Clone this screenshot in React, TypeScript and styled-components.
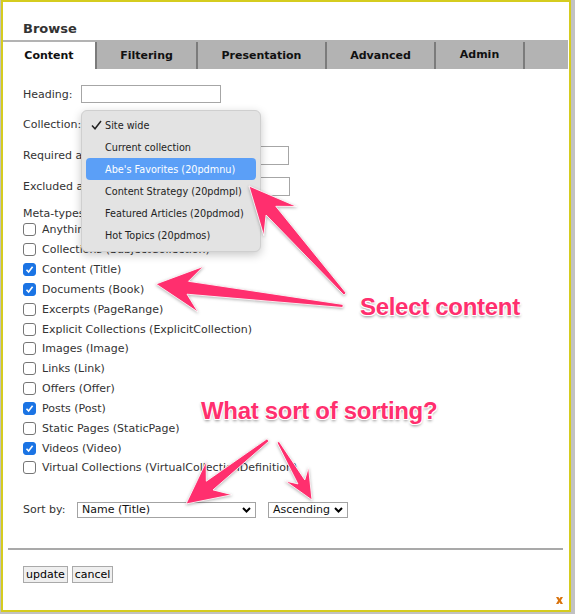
import React from "react";
import styled, { createGlobalStyle } from "styled-components";

const Global = createGlobalStyle`
  html, body { margin: 0; padding: 0; background: #c2c2c2; }
  body { font-family: "DejaVu Sans", Verdana, sans-serif; }
`;

const Stage = styled.div`
  position: relative;
  width: 575px;
  height: 614px;
  background: #c2c2c2;
  overflow: hidden;
`;

const Dialog = styled.div`
  position: relative;
  box-sizing: border-box;
  margin-left: 1px;
  width: 570px;
  height: 612px;
  border: 2px solid #d5cc1f;
  background: #fff;
  display: flex;
  flex-direction: column;
  font-family: "DejaVu Sans", Verdana, sans-serif;
  color: #333;
`;

const Title = styled.h1`
  margin: 19px 0 0 20px;
  font-size: 13px;
  line-height: 16px;
  font-weight: bold;
  color: #333;
`;

const TabBar = styled.div`
  margin: 3px 1px 0 0;
  padding-top: 2px;
  background: #b3b3b3;
  display: flex;
`;

const Tab = styled.div<{ $w: number; $active?: boolean; $lift?: number }>`
  box-sizing: border-box;
  width: ${(p) => p.$w}px;
  height: 27px;
  border-right: 2px solid #7b7b7b;
  background: ${(p) => (p.$active ? "#fff" : "transparent")};
  display: flex;
  align-items: center;
  justify-content: center;
  padding-bottom: ${(p) => p.$lift ?? 0}px;
  font-size: 11px;
  font-weight: bold;
  color: #111;
`;

const Body = styled.div`
  padding: 16px 20px 0 20px;
  display: flex;
  flex-direction: column;
`;

const Row = styled.div<{ $mt: number; $h: number; $w?: number }>`
  position: relative;
  display: flex;
  align-items: center;
  margin-top: ${(p) => p.$mt}px;
  height: ${(p) => p.$h}px;
  width: ${(p) => (p.$w ? `${p.$w}px` : "auto")};
`;

const Label = styled.span<{ $w?: number }>`
  flex: none;
  width: ${(p) => (p.$w ? `${p.$w}px` : "auto")};
  font-size: 11px;
  color: #333;
  white-space: nowrap;
`;

const TextInput = styled.input<{ $w?: number }>`
  box-sizing: border-box;
  height: 100%;
  margin: 0 0 0 ${(p) => (p.$w ? 0 : 5)}px;
  padding: 0 3px;
  border: 1px solid #a6a6a6;
  ${(p) => (p.$w ? `width: ${p.$w}px;` : "flex: 1; min-width: 0;")}
  font: 11px "DejaVu Sans", sans-serif;
`;

const Menu = styled.ul`
  position: absolute;
  left: 58px;
  top: -5px;
  z-index: 2;
  box-sizing: border-box;
  width: 180px;
  margin: 0;
  padding: 3px 4px 5px;
  list-style: none;
  background: #e3e3e3;
  border: 1px solid #cfcfcf;
  border-radius: 6px;
  box-shadow: 0 3px 10px rgba(0, 0, 0, 0.22);
  font-family: "DejaVu Sans", sans-serif;
  font-size: 9.7px;
`;

const MenuItem = styled.li<{ $hl?: boolean }>`
  height: 22px;
  display: flex;
  align-items: center;
  padding-left: 5px;
  border-radius: 4px;
  background: ${(p) => (p.$hl ? "#5b9ff7" : "transparent")};
  color: ${(p) => (p.$hl ? "#fff" : "#222")};
  white-space: nowrap;
`;

const CheckSlot = styled.span`
  width: 14px;
  flex: none;
  display: flex;
  align-items: center;
`;

const CheckList = styled.div`
  display: flex;
  flex-direction: column;
`;

const CheckRow = styled.label`
  height: 19.83px;
  display: flex;
  align-items: center;
  gap: 6px;
  font-size: 11px;
  color: #333;
  white-space: nowrap;
`;

const Box = styled.span<{ $on: boolean }>`
  box-sizing: border-box;
  flex: none;
  width: 13px;
  height: 13px;
  border-radius: 3px;
  border: 1px solid ${(p) => (p.$on ? "#1b74e4" : "#767676")};
  background: ${(p) => (p.$on ? "#1b74e4" : "#fff")};
  display: flex;
  align-items: center;
  justify-content: center;
`;

const SelectBox = styled.div<{ $w: number; $ml?: number }>`
  box-sizing: border-box;
  width: ${(p) => p.$w}px;
  height: 16px;
  margin-left: ${(p) => p.$ml ?? 0}px;
  border: 1px solid #a3a3a3;
  display: flex;
  align-items: center;
  justify-content: space-between;
  padding: 0 4px 0 4px;
  font-size: 11px;
  color: #111;
  white-space: nowrap;
`;

const Rule = styled.hr`
  margin: 29px 6px 0 5px;
  border: 0;
  border-top: 2px solid #a9a9a9;
  height: 0;
`;

const Footer = styled.div`
  margin-top: 16px;
  padding: 0 20px;
  display: flex;
  gap: 4px;
`;

const Button = styled.button`
  box-sizing: border-box;
  height: 17px;
  margin: 0;
  padding: 0 2px;
  border: 1px solid #a9a9a9;
  background: #efefef;
  font: 11px "DejaVu Sans", Verdana, sans-serif;
  color: #000;
  line-height: 15px;
`;

const CloseRow = styled.div`
  margin-top: 14px;
  padding-right: 6px;
  display: flex;
  justify-content: flex-end;
`;

const Overlay = styled.svg`
  position: absolute;
  left: 0;
  top: 0;
  width: 575px;
  height: 614px;
  pointer-events: none;
  z-index: 5;
  filter: drop-shadow(0 1px 1.5px rgba(0, 0, 0, 0.3));
`;

const Callout = styled.div<{ $x: number; $y: number }>`
  position: absolute;
  left: ${(p) => p.$x}px;
  top: ${(p) => p.$y}px;
  z-index: 6;
  font-family: "Liberation Sans", Arial, sans-serif;
  font-weight: bold;
  font-size: 24px;
  line-height: 24px;
  letter-spacing: -0.3px;
  color: #ff2f6e;
  white-space: nowrap;
  text-shadow: -1px -1px 0 #fff, 1px -1px 0 #fff, -1px 1px 0 #fff,
    1px 1px 0 #fff, 0 0 1px #fff, 0 2px 3px rgba(0, 0, 0, 0.45);
`;

type P = [number, number];

function arrow(
  tail: P,
  tip: P,
  wingDist: number,
  wingHalf: number,
  joinDist: number,
  shaftHalf: number,
  tailHalf: number
): string {
  const dx = tail[0] - tip[0];
  const dy = tail[1] - tip[1];
  const len = Math.hypot(dx, dy);
  const bx = dx / len;
  const by = dy / len;
  const nx = -by;
  const ny = bx;
  const pt = (along: number, side: number, base: P = tip): string =>
    `${(base[0] + bx * along + nx * side).toFixed(1)},${(
      base[1] + by * along + ny * side
    ).toFixed(1)}`;
  return [
    pt(0, 0),
    pt(wingDist, wingHalf),
    pt(joinDist, shaftHalf),
    pt(0, tailHalf, tail),
    pt(0, -tailHalf, tail),
    pt(joinDist, -shaftHalf),
    pt(wingDist, -wingHalf),
  ].join(" ");
}

const ARROWS = [
  arrow([345, 294], [249, 186], 47, 22, 33, 6.5, 1.5),
  arrow([343, 306], [156, 284], 45, 23, 32, 6.5, 1.5),
  arrow([268, 440], [186, 504], 42, 21, 30, 5.5, 1.5),
  arrow([278, 442], [312, 500], 30, 13.5, 21, 4, 1.2),
];

const Chevron = () => (
  <svg width="9" height="6" viewBox="0 0 9 6">
    <polyline points="1,1 4.5,4.5 8,1" fill="none" stroke="#000" strokeWidth="2" />
  </svg>
);

const Tick = () => (
  <svg width="9" height="9" viewBox="0 0 9 9">
    <polyline points="1.5,4.8 3.6,7 7.6,1.8" fill="none" stroke="#fff" strokeWidth="1.6" />
  </svg>
);

const MenuCheck = () => (
  <svg width="11" height="10" viewBox="0 0 11 10">
    <polyline points="1,5.5 4,8.8 10,1" fill="none" stroke="#222" strokeWidth="1.5" />
  </svg>
);

const CloseX = () => (
  <svg width="7" height="7" viewBox="0 0 7 7">
    <path
      d="M0 0h2.4l1.1 1.7 1.1-1.7H7L4.9 3.5 7 7H4.6L3.5 5.3 2.4 7H0l2.1-3.5z"
      fill="#d9730d"
    />
  </svg>
);

const TABS = [
  { label: "Content", w: 94, active: true },
  { label: "Filtering", w: 101 },
  { label: "Presentation", w: 129 },
  { label: "Advanced", w: 109 },
  { label: "Admin", w: 89, lift: 3 },
];

const MENU = [
  { label: "Site wide", checked: true },
  { label: "Current collection" },
  { label: "Abe's Favorites (20pdmnu)", hl: true },
  { label: "Content Strategy (20pdmpl)" },
  { label: "Featured Articles (20pdmod)" },
  { label: "Hot Topics (20pdmos)" },
];

const TYPES: [string, boolean][] = [
  ["Anything (Object)", false],
  ["Collections (SubjectCollection)", false],
  ["Content (Title)", true],
  ["Documents (Book)", true],
  ["Excerpts (PageRange)", false],
  ["Explicit Collections (ExplicitCollection)", false],
  ["Images (Image)", false],
  ["Links (Link)", false],
  ["Offers (Offer)", false],
  ["Posts (Post)", true],
  ["Static Pages (StaticPage)", false],
  ["Videos (Video)", true],
  ["Virtual Collections (VirtualCollectionDefinition)", false],
];

export default function App() {
  return (
    <Stage>
      <Global />
      <Dialog>
        <Title>Browse</Title>
        <TabBar>
          {TABS.map((t) => (
            <Tab key={t.label} $w={t.w} $active={t.active} $lift={t.lift}>
              {t.label}
            </Tab>
          ))}
        </TabBar>
        <Body>
          <Row $mt={0} $h={18}>
            <Label $w={58}>Heading:</Label>
            <TextInput $w={140} />
          </Row>
          <Row $mt={12} $h={18}>
            <Label>Collection:</Label>
            <Menu>
              {MENU.map((m) => (
                <MenuItem key={m.label} $hl={m.hl}>
                  <CheckSlot>{m.checked && <MenuCheck />}</CheckSlot>
                  {m.label}
                </MenuItem>
              ))}
            </Menu>
          </Row>
          <Row $mt={13} $h={19} $w={266}>
            <Label>Required attributes:</Label>
            <TextInput />
          </Row>
          <Row $mt={12} $h={19} $w={267}>
            <Label>Excluded attributes:</Label>
            <TextInput />
          </Row>
          <Row $mt={10} $h={14}>
            <Label>Meta-types:</Label>
          </Row>
          <CheckList>
            {TYPES.map(([label, on]) => (
              <CheckRow key={label}>
                <Box $on={on}>{on && <Tick />}</Box>
                {label}
              </CheckRow>
            ))}
          </CheckList>
          <Row $mt={23} $h={18}>
            <Label $w={54}>Sort by:</Label>
            <SelectBox $w={179}>
              <span>Name (Title)</span>
              <Chevron />
            </SelectBox>
            <SelectBox $w={80} $ml={12}>
              <span>Ascending</span>
              <Chevron />
            </SelectBox>
          </Row>
        </Body>
        <Rule />
        <Footer>
          <Button>update</Button>
          <Button>cancel</Button>
        </Footer>
        <CloseRow>
          <CloseX />
        </CloseRow>
      </Dialog>
      <Overlay viewBox="0 0 575 614">
        {ARROWS.map((pts, i) => (
          <polygon
            key={i}
            points={pts}
            fill="#ff2f6e"
            stroke="rgba(255,255,255,0.85)"
            strokeWidth="1"
            strokeLinejoin="round"
          />
        ))}
      </Overlay>
      <Callout $x={360} $y={295}>Select content</Callout>
      <Callout $x={201} $y={399}>What sort of sorting?</Callout>
    </Stage>
  );
}
